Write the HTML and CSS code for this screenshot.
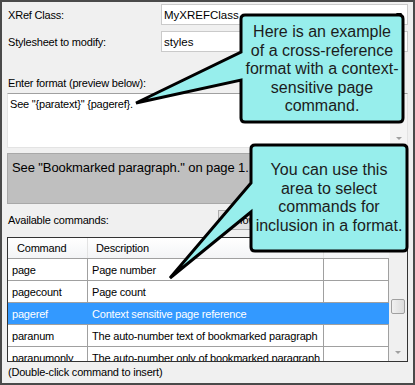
FILE: index.html
```html
<!DOCTYPE html>
<html lang="en">

<head>
    <meta charset="UTF-8">
    <title>Cross-Reference Format</title>
    <link rel="stylesheet" href="styles.css">
</head>

<body>
    <div class="page">
        <!-- Dialog -->
        <div class="dialog">
            <div class="field-row first">
                <span class="field-label">XRef Class:</span>
                <div class="combo">MyXREFClass<span class="combo-arrow"></span></div>
            </div>
            <div class="field-row">
                <span class="field-label">Stylesheet to modify:</span>
                <div class="combo">styles</div>
            </div>

            <div class="format-label">Enter format (preview below):</div>
            <div class="format-box">
                <div class="format-text">See "{paratext}" {pageref}.</div>
                <div class="text-scroll"><span class="arrow-down"></span></div>
            </div>

            <div class="preview">See "Bookmarked paragraph." on page 1.</div>

            <div class="commands-head">
                <span class="commands-label">Available commands:</span>
                <button class="small-btn">Show</button>
            </div>

            <div class="list">
                <div class="list-main">
                    <div class="list-row header">
                        <div class="cell c-cmd">Command</div>
                        <div class="cell c-desc">Description</div>
                        <div class="cell c-extra"></div>
                    </div>
                    <div class="list-row">
                        <div class="cell c-cmd">page</div>
                        <div class="cell c-desc">Page number</div>
                        <div class="cell c-extra"></div>
                    </div>
                    <div class="list-row">
                        <div class="cell c-cmd">pagecount</div>
                        <div class="cell c-desc">Page count</div>
                        <div class="cell c-extra"></div>
                    </div>
                    <div class="list-row selected">
                        <div class="cell c-cmd">pageref</div>
                        <div class="cell c-desc">Context sensitive page reference</div>
                        <div class="cell c-extra"></div>
                    </div>
                    <div class="list-row">
                        <div class="cell c-cmd">paranum</div>
                        <div class="cell c-desc">The auto-number text of bookmarked paragraph</div>
                        <div class="cell c-extra"></div>
                    </div>
                    <div class="list-row">
                        <div class="cell c-cmd">paranumonly</div>
                        <div class="cell c-desc">The auto-number only of bookmarked paragraph</div>
                        <div class="cell c-extra"></div>
                    </div>
                </div>
                <div class="vscroll">
                    <span class="arrow-up"></span>
                    <span class="thumb"></span>
                    <span class="arrow-down"></span>
                </div>
            </div>

            <div class="hint">(Double-click command to insert)</div>
        </div>

        <!-- Callouts -->
        <svg class="callouts" width="415" height="385" viewBox="0 0 415 385">
            <path d="M245 15 H399 Q403 15 403 19 V118 Q403 122 399 122 H245 Q241 122 241 118 V80 L136 103 L241 52 V19 Q241 15 245 15 Z" />
            <path d="M255 145 H403 Q407 145 407 149 V247 Q407 251 403 251 H255 Q251 251 251 247 V212 L170 278 L251 183 V149 Q251 145 255 145 Z" />
        </svg>
        <div class="callout-text first">Here is an example<br>of a cross-reference<br>format with a context-<br>sensitive page<br>command.</div>
        <div class="callout-text second">You can use this<br>area to select<br>commands for<br>inclusion in a format.</div>
    </div>
</body>

</html>
```

FILE: styles.css
```css
/* General Styles */
* {
    box-sizing: border-box;
}

body {
    margin: 0;
    background-color: #ffffff;
    font-family: "Liberation Sans", Arial, sans-serif;
}

.page {
    position: relative;
    width: 415px;
    height: 385px;
    overflow: hidden;
}

.dialog {
    height: 385px;
    border: 2px solid #4a4a4a;
    background-color: #f0f0f0;
    padding: 0 5px;
    font-size: 11px;
    letter-spacing: -0.2px;
    color: #000;
}

/* Form fields */
.field-row {
    display: flex;
    align-items: center;
    height: 21px;
    margin-top: 6px;
}

.field-row.first {
    margin-top: 2px;
}

.field-label {
    width: 154px;
    padding-left: 1px;
}

.combo {
    flex: 1;
    height: 21px;
    display: flex;
    align-items: center;
    padding-left: 2px;
    background-color: #fff;
    border: 1px solid #cacaca;
    font-size: 11.5px;
    letter-spacing: 0;
}

.combo-arrow {
    margin-left: auto;
    margin-right: 5px;
    border-left: 3px solid transparent;
    border-right: 3px solid transparent;
    border-top: 4px solid #000;
}

.format-label {
    margin-top: 24px;
    padding-left: 1px;
    line-height: 14px;
}

.format-box {
    display: flex;
    height: 55px;
    margin-top: 3px;
    background-color: #fff;
    border: 1px solid #e3e3e3;
    border-top-color: #a0a0a0;
}

.format-text {
    flex: 1;
    padding: 3px 2px;
    line-height: 14px;
}

.text-scroll {
    width: 17px;
    display: flex;
    flex-direction: column;
    align-items: center;
    justify-content: flex-end;
    padding-bottom: 7px;
    background-color: #f4f4f4;
}

.arrow-down,
.arrow-up {
    border-left: 3px solid transparent;
    border-right: 3px solid transparent;
}

.arrow-down {
    border-top: 3px solid #a0a0a0;
}

.arrow-up {
    border-bottom: 3px solid #a0a0a0;
}

.preview {
    height: 51px;
    margin-top: 5px;
    padding: 6px 4px;
    background-color: #bfbfbf;
    border: 1px solid #a8a8a8;
    font-size: 13px;
    letter-spacing: -0.1px;
    line-height: 16px;
}

.commands-head {
    display: flex;
    align-items: center;
    height: 20px;
    margin-top: 6px;
}

.commands-label {
    width: 211px;
    padding-left: 1px;
}

.small-btn {
    height: 20px;
    width: 90px;
    padding: 0 0 0 10px;
    text-align: left;
    font: inherit;
    background-color: #e1e1e1;
    border: 1px solid #adadad;
}

/* Command list */
.list {
    display: flex;
    height: 125px;
    margin-top: 7px;
    border: 1px solid #333;
    background-color: #fff;
}

.list-main {
    width: 381px;
    overflow: hidden;
}

.list-row {
    display: flex;
    height: 22px;
    border-bottom: 1px solid #a0a0a0;
}

.list-row.header {
    height: 21px;
    background: linear-gradient(#ffffff, #f3f4f6);
}

.cell {
    display: flex;
    align-items: center;
    padding-left: 4px;
    border-right: 1px solid #a0a0a0;
    white-space: nowrap;
    overflow: hidden;
}

.c-cmd {
    width: 80px;
}

.c-desc {
    width: 236px;
}

.c-extra {
    width: 65px;
}

.header .cell {
    border-right-color: #e3e3e3;
}

.header .c-cmd {
    padding-left: 9px;
}

.header .c-desc {
    padding-left: 8px;
}

.header .c-extra {
    border-right: none;
}

.list-row.selected {
    background-color: #3399ff;
    color: #fff;
}

.selected .cell {
    border-right-color: #3399ff;
}

.vscroll {
    width: 18px;
    display: flex;
    flex-direction: column;
    align-items: center;
    padding: 8px 0 7px;
    background-color: #f0f0f0;
}

.thumb {
    width: 14px;
    height: 15px;
    margin-top: 50px;
    border: 1px solid #a0a0a0;
    border-radius: 2px;
    background: linear-gradient(90deg, #f0f0f0, #dcdcdc);
}

.vscroll .arrow-down {
    margin-top: auto;
}

.hint {
    margin-top: 3px;
    padding-left: 1px;
    line-height: 14px;
}

/* Callouts */
.callouts {
    position: absolute;
    left: 0;
    top: 0;
    pointer-events: none;
}

.callouts path {
    fill: #97eeec;
    stroke: #000;
    stroke-width: 3;
    stroke-linejoin: miter;
}

.callout-text {
    position: absolute;
    font-size: 16px;
    line-height: 18.5px;
    color: #1c1c1c;
    text-align: center;
}

.callout-text.first {
    left: 242px;
    top: 23px;
    width: 160px;
}

.callout-text.second {
    left: 252px;
    top: 161px;
    width: 154px;
}
```
